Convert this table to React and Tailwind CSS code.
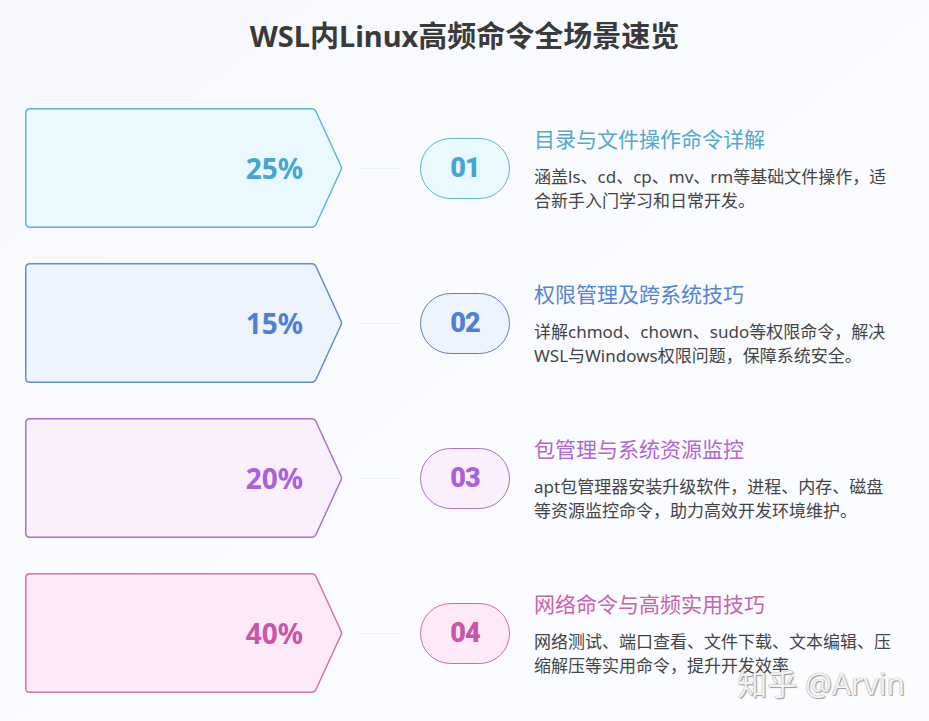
import React from 'react';

const rows = [
  {
    pct: '25%',
    num: '01',
    title: '目录与文件操作命令详解',
    desc: '涵盖ls、cd、cp、mv、rm等基础文件操作，适合新手入门学习和日常开发。',
    fill: '#e9f9fd',
    stroke: '#5fb5cf',
    text: 'text-[#45a6d2]',
    titleColor: 'text-[#52a9cc]',
    pillBg: 'bg-[#e9f9fd]',
    pillBorder: 'border-[#5fb5cf]',
  },
  {
    pct: '15%',
    num: '02',
    title: '权限管理及跨系统技巧',
    desc: '详解chmod、chown、sudo等权限命令，解决WSL与Windows权限问题，保障系统安全。',
    fill: '#eef4fe',
    stroke: '#5f8bd0',
    text: 'text-[#4f80d8]',
    titleColor: 'text-[#5484d2]',
    pillBg: 'bg-[#eef4fe]',
    pillBorder: 'border-[#5f80bf]',
  },
  {
    pct: '20%',
    num: '03',
    title: '包管理与系统资源监控',
    desc: 'apt包管理器安装升级软件，进程、内存、磁盘等资源监控命令，助力高效开发环境维护。',
    fill: '#f9effd',
    stroke: '#a96fd2',
    text: 'text-[#ab5fdb]',
    titleColor: 'text-[#ad68d4]',
    pillBg: 'bg-[#f9effd]',
    pillBorder: 'border-[#a96fd2]',
  },
  {
    pct: '40%',
    num: '04',
    title: '网络命令与高频实用技巧',
    desc: '网络测试、端口查看、文件下载、文本编辑、压缩解压等实用命令，提升开发效率',
    fill: '#fde9f7',
    stroke: '#cc72b0',
    text: 'text-[#c955a8]',
    titleColor: 'text-[#c962ac]',
    pillBg: 'bg-[#fde9f7]',
    pillBorder: 'border-[#c96fae]',
  },
];

function ArrowShape({ fill, stroke }) {
  // pentagon arrow with slightly rounded corners
  return (
    <svg className="absolute inset-0" width="318" height="120" viewBox="0 0 318 120">
      <path
        d="M5 0.75 H287 Q289.5 0.75 291 3.5 L316 58 Q317 60 316 62 L291 116.5 Q289.5 119.25 287 119.25 H5 Q0.75 119.25 0.75 115 V5 Q0.75 0.75 5 0.75 Z"
        fill={fill}
        stroke={stroke}
        strokeWidth="1.5"
      />
    </svg>
  );
}

export default function App() {
  return (
    <div
      className="relative w-[929px] h-[721px] overflow-hidden bg-gradient-to-br from-[#f6f8fc] via-[#fafbfe] to-[#fbfcfe]"
      style={{ fontFamily: '"Noto Sans", "Noto Sans CJK SC", sans-serif' }}
    >
      <h1 className="pt-[16px] text-center text-[29px] leading-[40px] font-bold text-[#3a3a3a]">
        WSL内Linux高频命令全场景速览
      </h1>

      <div className="mt-[52px] flex flex-col gap-[35px]">
        {rows.map((r) => (
          <div key={r.num} className="flex h-[120px] items-center pl-[25px]">
            <div className="relative h-[120px] w-[318px] shrink-0">
              <ArrowShape fill={r.fill} stroke={r.stroke} />
              <div className="relative flex h-full items-center justify-end pr-[40px]">
                <span className={`text-[28px] font-bold leading-none ${r.text}`}>{r.pct}</span>
              </div>
            </div>

            <div className="ml-[18px] w-[38px] shrink-0 border-t border-dotted border-[#e2e6ee]" />

            <div
              className={`ml-[21px] flex h-[61px] w-[90px] shrink-0 items-center justify-center rounded-full border-[1.5px] ${r.pillBg} ${r.pillBorder}`}
            >
              <span
                className={`text-[27px] font-black leading-none tracking-[-1px] ${r.text}`}
                style={{ fontFamily: 'Roboto, sans-serif' }}
              >
                {r.num}
              </span>
            </div>

            <div className="ml-[24px] self-start mt-[17px] w-[362px]">
              <div className={`text-[21px] leading-[28px] ${r.titleColor}`}>{r.title}</div>
              <p className="mt-[12px] text-[17px] leading-[24px] text-[#444444]">{r.desc}</p>
            </div>
          </div>
        ))}
      </div>

      <div
        className="absolute right-[24px] bottom-[22px] text-[30px] leading-none text-[#f2f2f2]"
        style={{ textShadow: '0 0 1px #8a8a8a, 1px 1px 1px #9a9a9a' }}
      >
        知乎 @Arvin
      </div>
    </div>
  );
}
